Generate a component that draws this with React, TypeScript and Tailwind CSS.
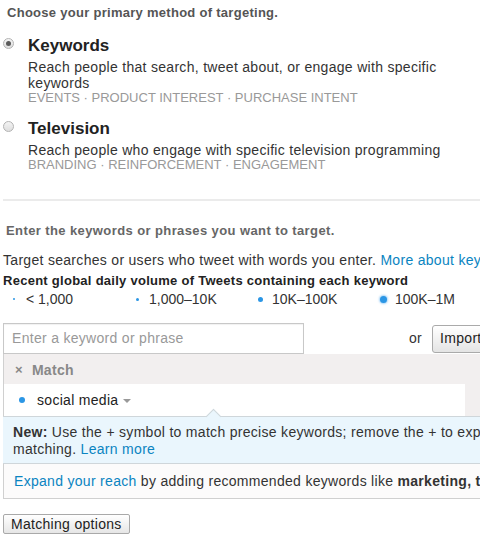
import React from "react";

const font = "font-['Liberation_Sans',Arial,Helvetica,sans-serif]";

function Radio({ checked }: { checked?: boolean }) {
  return (
    <span className="flex h-[11px] w-[11px] shrink-0 items-center justify-center rounded-full border border-[#b3b3b3] bg-gradient-to-b from-[#f4f4f4] to-[#dedede]">
      {checked && <span className="h-[5px] w-[5px] rounded-full bg-[#5a5a5a]" />}
    </span>
  );
}

function Option({
  checked,
  title,
  desc,
  tags,
}: {
  checked?: boolean;
  title: string;
  desc: React.ReactNode;
  tags: string[];
}) {
  return (
    <div className="flex">
      <div className="w-[28px] shrink-0 pl-[3px] pt-[2px]">
        <Radio checked={checked} />
      </div>
      <div>
        <div className="text-[17px] font-bold leading-[20px] tracking-normal text-[#222]">{title}</div>
        <div className="mt-[3px] text-[14px] leading-[16px] text-[#333]">{desc}</div>
        <div className="text-[13px] leading-[14px] tracking-normal text-[#999]">{tags.join(" · ")}</div>
      </div>
    </div>
  );
}

function Dot({ size }: { size: number }) {
  const cls =
    size === 1
      ? "h-[2px] w-[2px]"
      : size === 2
        ? "h-[3px] w-[3px]"
        : size === 3
          ? "h-[5px] w-[5px]"
          : "h-[7px] w-[7px] shadow-[0_0_2px_1px_rgba(60,160,240,0.45)]";
  return (
    <span className="flex w-[22px] justify-center">
      <span className={`${cls} rounded-full bg-[#2b96e5]`} />
    </span>
  );
}

const legend: [number, string][] = [
  [1, "< 1,000"],
  [2, "1,000–10K"],
  [3, "10K–100K"],
  [4, "100K–1M"],
];

export default function App() {
  return (
    <div className={`h-[540px] w-[480px] overflow-hidden bg-white tracking-[0.3px] ${font}`}>
      <div className="w-[600px]">
        <div className="pl-[7px] pt-[5px] text-[13px] font-bold leading-[16px] tracking-[0.28px] text-[#555]">
          Choose your primary method of targeting.
        </div>

        <div className="mt-[15px]">
          <Option
            checked
            title="Keywords"
            desc={
              <>
                Reach people that search, tweet about, or engage with specific
                <br />
                keywords
              </>
            }
            tags={["EVENTS", "PRODUCT INTEREST", "PURCHASE INTENT"]}
          />
        </div>
        <div className="mt-[14px]">
          <Option
            title="Television"
            desc="Reach people who engage with specific television programming"
            tags={["BRANDING", "REINFORCEMENT", "ENGAGEMENT"]}
          />
        </div>

        <div className="ml-[3px] mt-[27px] h-[2px] bg-[#ebebeb]" />

        <div className="pl-[6px] pt-[22px] text-[13px] font-bold leading-[16px] tracking-[0.4px] text-[#666]">
          Enter the keywords or phrases you want to target.
        </div>
        <div className="mt-[12px] whitespace-nowrap pl-[3px] text-[14px] leading-[18px] text-[#333]">
          Target searches or users who tweet with words you enter.{" "}
          <a className="text-[#0a84c1]">More about keywords</a>
        </div>
        <div className="mt-[4px] whitespace-nowrap pl-[3px] text-[13px] font-bold leading-[16px] tracking-[0.27px] text-[#222]">
          Recent global daily volume of Tweets containing each keyword
        </div>
        <div className="mt-[2px] flex pl-[3px] text-[14px] leading-[16px] tracking-normal text-[#333]">
          {legend.map(([s, label]) => (
            <div key={label} className="flex w-[123px] items-center gap-[1px]">
              <Dot size={s} />
              <span>{label}</span>
            </div>
          ))}
        </div>

        <div className="mt-[16px] flex items-center pl-[3px]">
          <div className="flex h-[31px] w-[301px] items-center border border-[#c8c8c8] bg-white pl-[8px] text-[14px] text-[#999] shadow-[inset_0_1px_1px_rgba(0,0,0,0.06)]">
            Enter a keyword or phrase
          </div>
          <span className="ml-[105px] text-[14px] text-[#333]">or</span>
          <button className="ml-[10px] h-[28px] rounded-[3px] border border-[#aaa] bg-gradient-to-b from-white to-[#e4e4e4] px-[7px] text-[14px] text-[#222]">
            Import keywords
          </button>
        </div>

        <div className="ml-[3px] border-l border-[#d0d0d0] bg-[#f2efef]">
          <div className="flex h-[30px] items-center pl-[11px] pt-[2px] text-[14px] font-bold text-[#888]">
            <span className="text-[13px]">×</span>
            <span className="ml-[9px]">Match</span>
          </div>
          <div className="flex h-[32px] w-[461px] items-center bg-white pl-[15px] text-[14px] text-[#222]">
            <span className="h-[6px] w-[6px] rounded-full bg-[#2b96e5]" />
            <span className="ml-[12px]">social media</span>
            <span className="ml-[5px] mt-[1px] border-x-[4px] border-t-[4px] border-x-transparent border-t-[#999]" />
          </div>
        </div>

        <div className="relative ml-[3px] border-y border-[#cfd6da] bg-[#eaf6fd] px-[10px] pb-[5px] pt-[7px] text-[14px] leading-[17px] text-[#333]">
          <span className="absolute -top-[6px] left-[205px] h-[11px] w-[11px] rotate-45 border-l border-t border-[#cfd6da] bg-[#eaf6fd]" />
          <div className="relative whitespace-nowrap">
            <b>New:</b> Use the + symbol to match precise keywords; remove the + to expand to broad
          </div>
          <div className="relative">
            matching. <a className="text-[#0a84c1]">Learn more</a>
          </div>
        </div>

        <div className="ml-[3px] flex h-[35px] items-center whitespace-nowrap border-b border-l border-[#d0d0d0] bg-[#fcfbfb] pl-[10px] text-[14px] text-[#333]">
          <a className="text-[#0a84c1]">Expand your reach</a>&nbsp;by adding recommended keywords like&nbsp;
          <b>marketing, technology</b>
        </div>

        <div className="mt-[13px] pl-[3px]">
          <button className="h-[20px] rounded-[2px] border border-[#a9a9a9] bg-gradient-to-b from-white to-[#e6e6e6] px-[7px] text-[14px] leading-[18px] text-[#222]">
            Matching options
          </button>
        </div>
      </div>
    </div>
  );
}
